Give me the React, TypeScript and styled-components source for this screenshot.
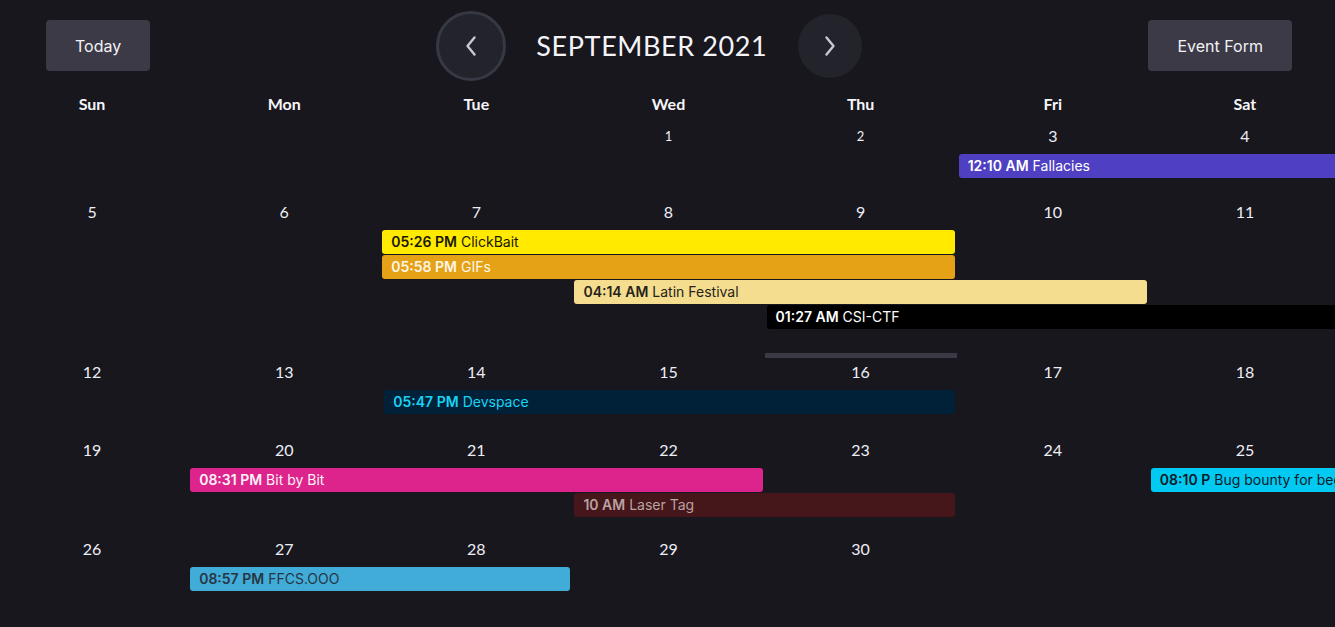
import React from 'react';
import styled, { createGlobalStyle } from 'styled-components';

const GlobalStyle = createGlobalStyle`
  html, body {
    margin: 0;
    padding: 0;
    background: #18171d;
    overflow: hidden;
  }
  body {
    font-family: Inter, "Liberation Sans", sans-serif;
    color: #ffffff;
  }
`;

const Page = styled.div`
  width: 1335px;
  height: 627px;
  overflow: hidden;
  background: #18171d;
`;

const TopBar = styled.div`
  display: flex;
  align-items: center;
  justify-content: space-between;
  height: 51px;
  margin-top: 20px;
  padding: 0 43px 0 46px;
`;

const Button = styled.button<{ $wide?: boolean }>`
  height: 51px;
  padding: 0 ${(p) => (p.$wide ? '29px' : '29px')};
  border: none;
  border-radius: 4px;
  background: #3b3a46;
  color: #f2f2f6;
  font-family: Inter, "Liberation Sans", sans-serif;
  font-size: 16px;
  cursor: pointer;
`;

const MonthNav = styled.div`
  display: flex;
  align-items: center;
  margin-left: 0;
`;

const RoundButton = styled.button<{ $ring?: boolean }>`
  width: ${(p) => (p.$ring ? '70px' : '64px')};
  height: ${(p) => (p.$ring ? '70px' : '64px')};
  border-radius: 50%;
  border: ${(p) => (p.$ring ? '3px solid #363944' : 'none')};
  background: #22232b;
  display: flex;
  align-items: center;
  justify-content: center;
  padding: 0;
  cursor: pointer;
  box-sizing: border-box;
`;

const Title = styled.h1`
  margin: 0 32px 0 30px;
  font-family: Lato, "Open Sans", sans-serif;
  font-weight: 400;
  font-size: 27px;
  letter-spacing: 0.6px;
  color: #f4f4f8;
  width: 230px;
  text-align: center;
  white-space: nowrap;
`;

const Calendar = styled.div`
  width: 1345px;
  margin-left: -4px;
`;

const WeekdayRow = styled.div`
  display: grid;
  grid-template-columns: repeat(7, 1fr);
  margin-top: 21px;
  margin-bottom: 8px;
  height: 24px;
`;

const Weekday = styled.div`
  text-align: center;
  line-height: 24px;
  font-family: Lato, "Open Sans", sans-serif;
  font-weight: 700;
  font-size: 16px;
  color: #f6f6fa;
`;

const Week = styled.div<{ $pad: number }>`
  display: grid;
  grid-template-columns: repeat(7, 1fr);
  grid-template-rows: 29px;
  grid-auto-rows: 24px;
  row-gap: 1px;
  min-height: 76px;
  padding-bottom: ${(p) => p.$pad}px;
  box-sizing: border-box;
  align-content: start;
`;

const DateCell = styled.div<{ $col: number; $small?: boolean }>`
  grid-row: 1;
  grid-column: ${(p) => p.$col};
  align-self: start;
  text-align: center;
  line-height: 24px;
  font-family: Lato, "Open Sans", sans-serif;
  font-size: ${(p) => (p.$small ? '13px' : '16px')};
  color: #eeeef6;
`;

const Event = styled.div<{ $row: number; $col: number; $span: number; $bg: string; $fg: string; $inset?: number }>`
  grid-row: ${(p) => p.$row + 1};
  grid-column: ${(p) => `${p.$col} / span ${p.$span}`};
  margin: 0 2px 0 ${(p) => p.$inset ?? 2}px;
  height: 24px;
  border-radius: 3px;
  background: ${(p) => p.$bg};
  color: ${(p) => p.$fg};
  font-size: 14px;
  line-height: 24px;
  padding: 0 9px;
  white-space: nowrap;
  overflow: hidden;
`;

const Time = styled.b`
  font-weight: 600;
  margin-right: 4px;
`;

const DropHint = styled.div<{ $col: number; $row: number }>`
  grid-row: ${(p) => p.$row + 1};
  grid-column: ${(p) => p.$col};
  align-self: end;
  height: 5px;
  margin: 0 0 -4px;
  background: #3a3944;
`;

const Chevron = ({ dir }: { dir: 'left' | 'right' }) => (
  <svg width="14" height="22" viewBox="0 0 14 22" fill="none">
    <path
      d={dir === 'left' ? 'M10.5 2.5 L3.5 11 L10.5 19.5' : 'M3.5 2.5 L10.5 11 L3.5 19.5'}
      stroke="#c9c9d1"
      strokeWidth="2.4"
      strokeLinecap="round"
      strokeLinejoin="round"
    />
  </svg>
);

type Ev = { row: number; col: number; span: number; time: string; name: string; bg: string; fg: string; inset?: number };

const weeks: { days: (number | null)[]; events: Ev[]; pad: number; small?: number[]; hint?: { col: number; row: number } }[] = [
  {
    days: [null, null, null, 1, 2, 3, 4],
    small: [1, 2],
    pad: 22,
    events: [{ row: 1, col: 6, span: 2, time: '12:10 AM', name: 'Fallacies', bg: '#4f3fc2', fg: '#ffffff' }],
  },
  {
    days: [5, 6, 7, 8, 9, 10, 11],
    pad: 6,
    hint: { col: 5, row: 5 },
    events: [
      { row: 1, col: 3, span: 3, time: '05:26 PM', name: 'ClickBait', bg: '#ffea00', fg: '#1a1800' },
      { row: 2, col: 3, span: 3, time: '05:58 PM', name: 'GIFs', bg: '#e5a216', fg: '#fff6e6' },
      { row: 3, col: 4, span: 3, time: '04:14 AM', name: 'Latin Festival', bg: '#f4dd8f', fg: '#26231a' },
      { row: 4, col: 5, span: 3, time: '01:27 AM', name: 'CSI-CTF', bg: '#000000', fg: '#ffffff' },
    ],
  },
  {
    days: [12, 13, 14, 15, 16, 17, 18],
    pad: 24,
    events: [{ row: 1, col: 3, span: 3, time: '05:47 PM', name: 'Devspace', bg: '#002138', fg: '#1ad3f3', inset: 4 }],
  },
  {
    days: [19, 20, 21, 22, 23, 24, 25],
    pad: 20,
    events: [
      { row: 1, col: 2, span: 3, time: '08:31 PM', name: 'Bit by Bit', bg: '#dd238c', fg: '#fff2f8' },
      { row: 1, col: 7, span: 1, time: '08:10 P', name: 'Bug bounty for beginners', bg: '#00c9f2', fg: '#0b1a26' },
      { row: 2, col: 4, span: 2, time: '10 AM', name: 'Laser Tag', bg: '#45161a', fg: '#bba2a2' },
    ],
  },
  {
    days: [26, 27, 28, 29, 30, null, null],
    pad: 20,
    events: [{ row: 1, col: 2, span: 2, time: '08:57 PM', name: 'FFCS.OOO', bg: '#41acd8', fg: '#283644' }],
  },
];

const WEEKDAYS = ['Sun', 'Mon', 'Tue', 'Wed', 'Thu', 'Fri', 'Sat'];

export default function App() {
  return (
    <Page>
      <GlobalStyle />
      <TopBar>
        <Button>Today</Button>
        <MonthNav>
          <RoundButton $ring>
            <Chevron dir="left" />
          </RoundButton>
          <Title>SEPTEMBER 2021</Title>
          <RoundButton>
            <Chevron dir="right" />
          </RoundButton>
        </MonthNav>
        <Button $wide>Event Form</Button>
      </TopBar>
      <Calendar>
        <WeekdayRow>
          {WEEKDAYS.map((d) => (
            <Weekday key={d}>{d}</Weekday>
          ))}
        </WeekdayRow>
        {weeks.map((w, wi) => (
          <Week key={wi} $pad={w.pad}>
            {w.days.map((d, di) =>
              d === null ? null : (
                <DateCell key={di} $col={di + 1} $small={w.small?.includes(d)}>
                  {d}
                </DateCell>
              )
            )}
            {w.events.map((e) => (
              <Event key={e.name} $row={e.row} $col={e.col} $span={e.span} $bg={e.bg} $fg={e.fg} $inset={e.inset}>
                <Time>{e.time}</Time>
                {e.name}
              </Event>
            ))}
            {w.hint && <DropHint $col={w.hint.col} $row={w.hint.row} />}
          </Week>
        ))}
      </Calendar>
    </Page>
  );
}
